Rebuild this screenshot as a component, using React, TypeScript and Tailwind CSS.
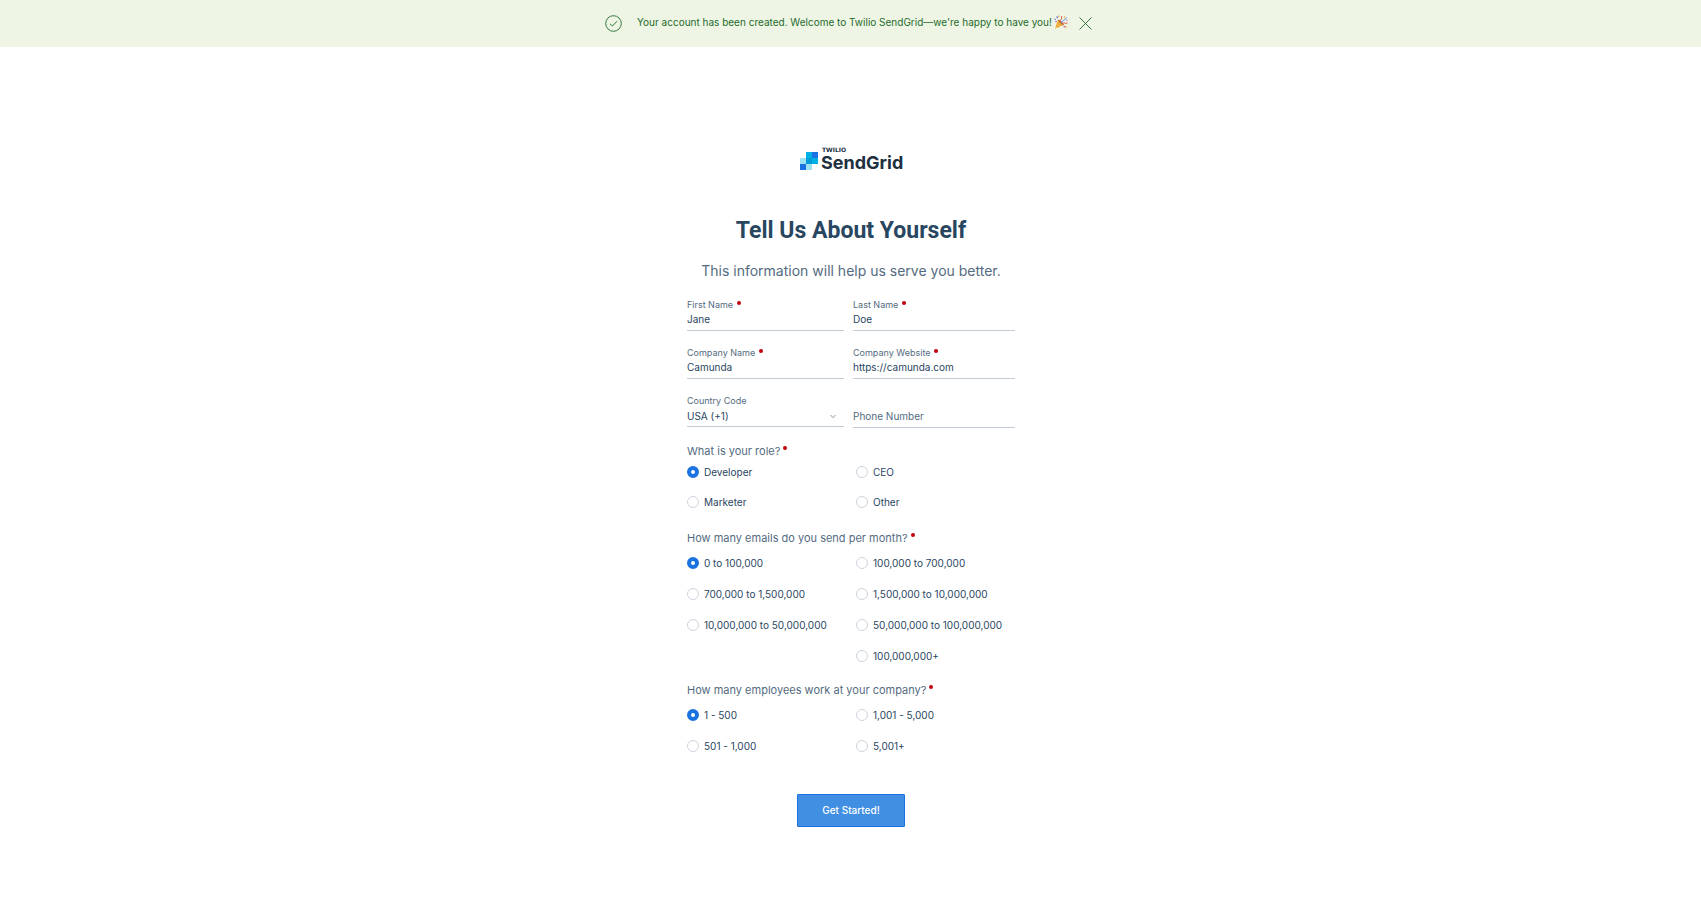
import React, { useState } from "react";

function Required() {
  return <span aria-hidden="true" className="mt-[3px] h-1 w-1 self-start rounded-full bg-[#c3000f]" />;
}

function Field({ id, label, value, type = "text" }: { id: string; label: string; value: string; type?: string }) {
  return (
    <div className="flex flex-col">
      <label htmlFor={id} className="flex gap-1 text-[9px] leading-[14px] text-[#546b81]">
        {label}
        <Required />
      </label>
      <input
        id={id}
        type={type}
        required
        defaultValue={value}
        className="w-full border-b border-[#c3ccd4] pb-1 text-[10px] leading-[14px] text-[#294661] outline-none"
      />
    </div>
  );
}

type Option = { label: string; lastColumn?: boolean };

function RadioGroup({
  name,
  legend,
  options,
  className,
  gridClassName = "mt-[9px] gap-y-[15px]",
}: {
  name: string;
  legend: string;
  options: Option[];
  className: string;
  gridClassName?: string;
}) {
  const [selected, setSelected] = useState(options[0].label);
  return (
    <fieldset className={className}>
      <legend className="flex gap-[3px] text-[11px] leading-4 text-[#546b81]">
        {legend}
        <Required />
      </legend>
      <div className={`grid grid-cols-[169px_1fr] ${gridClassName}`}>
        {options.map((o) => (
          <label
            key={o.label}
            className={`flex items-center gap-[5px] text-[10px] leading-4 text-[#294661] ${
              o.lastColumn ? "col-start-2" : ""
            }`}
          >
            <input
              type="radio"
              name={name}
              checked={selected === o.label}
              onChange={() => setSelected(o.label)}
              className="h-3 w-3 appearance-none rounded-full border border-[#cdd4dc] bg-white checked:border-4 checked:border-[#1a73e0]"
            />
            {o.label}
          </label>
        ))}
      </div>
    </fieldset>
  );
}

function Logo() {
  return (
    <svg width="103" height="25" viewBox="0 0 103 25" role="img" aria-label="Twilio SendGrid">
      <rect x="6" y="5" width="6" height="6" fill="#00b2e3" />
      <rect x="12" y="5" width="6" height="6" fill="#1a73e0" />
      <rect x="0" y="11" width="6" height="6" fill="#9de1f3" />
      <rect x="6" y="11" width="6" height="6" fill="#009dd9" />
      <rect x="12" y="11" width="6" height="6" fill="#00b2e3" />
      <rect x="0" y="17" width="6" height="6" fill="#1a73e0" />
      <rect x="6" y="17" width="6" height="6" fill="#9de1f3" />
      <text x="22" y="5" className="fill-[#20303f] font-['DejaVu_Sans',sans-serif] text-[6px] font-bold">
        TWILIO
      </text>
      <text x="21" y="22" className="fill-[#20303f] font-['Inter',sans-serif] text-[18px] font-bold">
        SendGrid
      </text>
    </svg>
  );
}

function PartyPopper() {
  return (
    <svg width="14" height="14" viewBox="0 0 28 28" aria-hidden="true">
      <path d="M8 9 20 20 2 27Z" fill="#f5b73c" />
      <path d="M6 14 14 22 M10 11 18 20 M4 20 9 25" stroke="#d98a3c" strokeWidth="1.4" fill="none" />
      <ellipse cx="14" cy="15" rx="2" ry="7.5" transform="rotate(-45 14 15)" fill="#b0703c" />
      <path d="M13 14C12 9 17 8 15 2" stroke="#e2564f" strokeWidth="2" fill="none" />
      <path d="M15 15C17 9 22 12 25 5" stroke="#5a8fe0" strokeWidth="2" fill="none" />
      <path d="M16 17C20 14 22 18 27 16" stroke="#e2564f" strokeWidth="2" fill="none" />
      <path d="M5 3l3 3M1 8l3 1" stroke="#6f7fd6" strokeWidth="2.4" />
      <path d="M20 3l2 2M9 1l1 3M22 22l3 3" stroke="#f0a63a" strokeWidth="2.4" />
      <path d="M25 10l2 1M20 22l1 3M3 12l2 2" stroke="#c05ad0" strokeWidth="2.4" />
    </svg>
  );
}

export default function App() {
  const [bannerOpen, setBannerOpen] = useState(true);
  return (
    <div className="min-h-screen bg-white font-['Inter',sans-serif]">
      {bannerOpen && (
        <div role="status" className="flex h-[47px] items-center justify-center bg-[#eef5e4] pr-1 text-[#1f6b2e]">
          <svg width="17" height="17" viewBox="0 0 17 17" fill="none" stroke="currentColor" aria-hidden="true">
            <circle cx="8.5" cy="8.5" r="7.8" strokeWidth="0.9" />
            <path d="M5 8.8 7.4 11 12 6.2" strokeWidth="0.9" />
          </svg>
          <p className="ml-[15px] flex items-center gap-[2px] pb-[3px] text-[10px] leading-4">
            Your account has been created. Welcome to Twilio SendGrid—we're happy to have you!
            <PartyPopper />
          </p>
          <button type="button" aria-label="Dismiss" onClick={() => setBannerOpen(false)} className="ml-[11px]">
            <svg width="13" height="13" viewBox="0 0 13 13" fill="none" stroke="currentColor" aria-hidden="true">
              <path d="M0.5 0.5 12.5 12.5M12.5 0.5 0.5 12.5" strokeWidth="0.9" />
            </svg>
          </button>
        </div>
      )}

      <main className="flex flex-col items-center pt-[100px] pr-4 pb-12 pl-[17px]">
        <Logo />
        <h1 className="mt-[43px] font-['Roboto',sans-serif] text-[23px] leading-8 font-bold text-[#294661]">
          Tell Us About Yourself
        </h1>
        <p className="mt-[14px] text-sm leading-5 text-[#546b81]">This information will help us serve you better.</p>

        <form className="mt-[17px] w-full max-w-[328px]" onSubmit={(e) => e.preventDefault()}>
          <div className="grid grid-cols-[157px_1fr] gap-x-[9px] gap-y-[15px]">
            <Field id="first-name" label="First Name" value="Jane" />
            <Field id="last-name" label="Last Name" value="Doe" />
            <Field id="company-name" label="Company Name" value="Camunda" />
            <Field id="company-website" label="Company Website" value="https://camunda.com" type="url" />
            <div className="flex flex-col">
              <label htmlFor="country-code" className="text-[9px] leading-[14px] text-[#546b81]">
                Country Code
              </label>
              <div className="relative">
                <select
                  id="country-code"
                  className="block h-[19px] w-full appearance-none border-b border-[#c3ccd4] pb-[2px] text-[10px] leading-[14px] text-[#294661] outline-none"
                >
                  <option>USA (+1)</option>
                </select>
                <svg
                  className="pointer-events-none absolute top-[6px] right-2"
                  width="6"
                  height="5"
                  viewBox="0 0 6 5"
                  fill="none"
                  stroke="#7d8fa0"
                  aria-hidden="true"
                >
                  <path d="M0.5 1 3 3.7 5.5 1" strokeWidth="0.9" />
                </svg>
              </div>
            </div>
            <div className="flex flex-col justify-end pt-[15px]">
              <input
                id="phone"
                type="tel"
                aria-label="Phone Number"
                placeholder="Phone Number"
                className="w-full border-b border-[#c3ccd4] pb-1 text-[10px] leading-[14px] text-[#294661] outline-none placeholder:text-[#546b81]"
              />
            </div>
          </div>

          <RadioGroup
            className="mt-[15px]"
            gridClassName="mt-[5px] gap-y-[14px]"
            name="role"
            legend="What is your role?"
            options={[{ label: "Developer" }, { label: "CEO" }, { label: "Marketer" }, { label: "Other" }]}
          />
          <RadioGroup
            className="mt-5"
            name="emails"
            legend="How many emails do you send per month?"
            options={[
              { label: "0 to 100,000" },
              { label: "100,000 to 700,000" },
              { label: "700,000 to 1,500,000" },
              { label: "1,500,000 to 10,000,000" },
              { label: "10,000,000 to 50,000,000" },
              { label: "50,000,000 to 100,000,000" },
              { label: "100,000,000+", lastColumn: true },
            ]}
          />
          <RadioGroup
            className="mt-[18px]"
            name="employees"
            legend="How many employees work at your company?"
            options={[{ label: "1 - 500" }, { label: "1,001 - 5,000" }, { label: "501 - 1,000" }, { label: "5,001+" }]}
          />

          <div className="mt-10 flex justify-center">
            <button
              type="submit"
              className="h-[33px] rounded-[1px] border border-[#1a73e0] bg-[#418fe2] px-6 pb-[2px] text-[10px] leading-4 font-medium text-white"
            >
              Get Started!
            </button>
          </div>
        </form>
      </main>
    </div>
  );
}
